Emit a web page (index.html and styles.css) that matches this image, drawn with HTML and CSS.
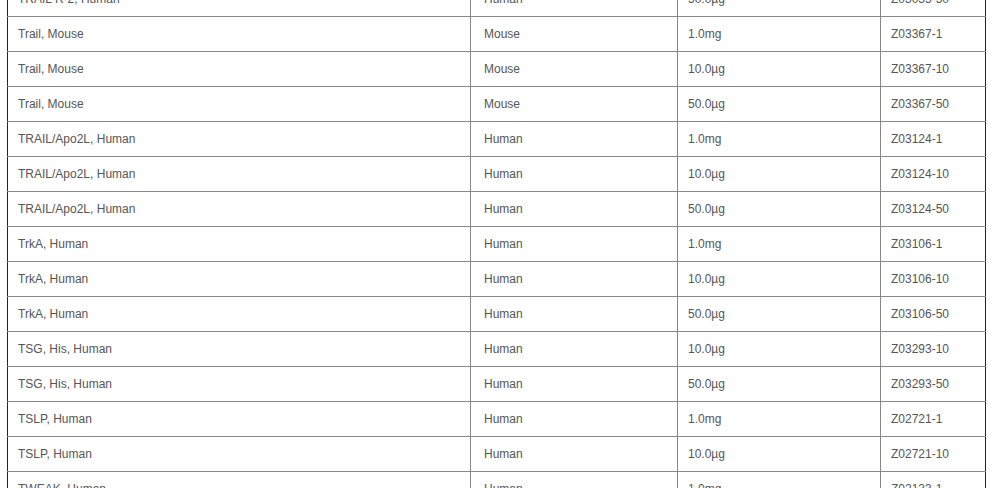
FILE: index.html
```html
<!DOCTYPE html>
<html>
<head>
<meta charset="utf-8">
<link rel="stylesheet" href="styles.css">
</head>
<body>
<div class="viewport">
<table class="products">
<colgroup><col class="c1"><col class="c2"><col class="c3"><col class="c4"></colgroup>
<tbody>
<tr><td>TRAIL R-2, Human</td><td>Human</td><td>50.0µg</td><td>Z03035-50</td></tr>
<tr><td>Trail, Mouse</td><td>Mouse</td><td>1.0mg</td><td>Z03367-1</td></tr>
<tr><td>Trail, Mouse</td><td>Mouse</td><td>10.0µg</td><td>Z03367-10</td></tr>
<tr><td>Trail, Mouse</td><td>Mouse</td><td>50.0µg</td><td>Z03367-50</td></tr>
<tr><td>TRAIL/Apo2L, Human</td><td>Human</td><td>1.0mg</td><td>Z03124-1</td></tr>
<tr><td>TRAIL/Apo2L, Human</td><td>Human</td><td>10.0µg</td><td>Z03124-10</td></tr>
<tr><td>TRAIL/Apo2L, Human</td><td>Human</td><td>50.0µg</td><td>Z03124-50</td></tr>
<tr><td>TrkA, Human</td><td>Human</td><td>1.0mg</td><td>Z03106-1</td></tr>
<tr><td>TrkA, Human</td><td>Human</td><td>10.0µg</td><td>Z03106-10</td></tr>
<tr><td>TrkA, Human</td><td>Human</td><td>50.0µg</td><td>Z03106-50</td></tr>
<tr><td>TSG, His, Human</td><td>Human</td><td>10.0µg</td><td>Z03293-10</td></tr>
<tr><td>TSG, His, Human</td><td>Human</td><td>50.0µg</td><td>Z03293-50</td></tr>
<tr><td>TSLP, Human</td><td>Human</td><td>1.0mg</td><td>Z02721-1</td></tr>
<tr><td>TSLP, Human</td><td>Human</td><td>10.0µg</td><td>Z02721-10</td></tr>
<tr><td>TWEAK, Human</td><td>Human</td><td>1.0mg</td><td>Z02133-1</td></tr>
</tbody>
</table>
</div>
</body>
</html>
```
FILE: styles.css
```css
html, body {
  margin: 0;
  padding: 0;
  background: #fff;
  overflow: hidden;
}
.viewport {
  height: 488px;
  overflow: hidden;
  padding-left: 7px;
}
.products {
  margin-top: -19px;
  width: 978px;
  table-layout: fixed;
  border-collapse: collapse;
  font-family: "Liberation Sans", Arial, sans-serif;
  font-size: 12px;
  color: #555;
  border-left: 1px solid #222;
  border-right: 1px solid #222;
}
.c1 { width: 463px; }
.c2 { width: 207px; }
.c3 { width: 203px; }
.c4 { width: 105px; }
.products td {
  height: 34px;
  padding: 0 0 0 10px;
  border: 1px solid #888;
  vertical-align: middle;
  white-space: nowrap;
  overflow: hidden;
}
.products td:first-child { border-left: 1px solid #222; }
.products td:last-child { border-right: 1px solid #222; }
.products td:nth-child(2) { padding-left: 13px; }
```
